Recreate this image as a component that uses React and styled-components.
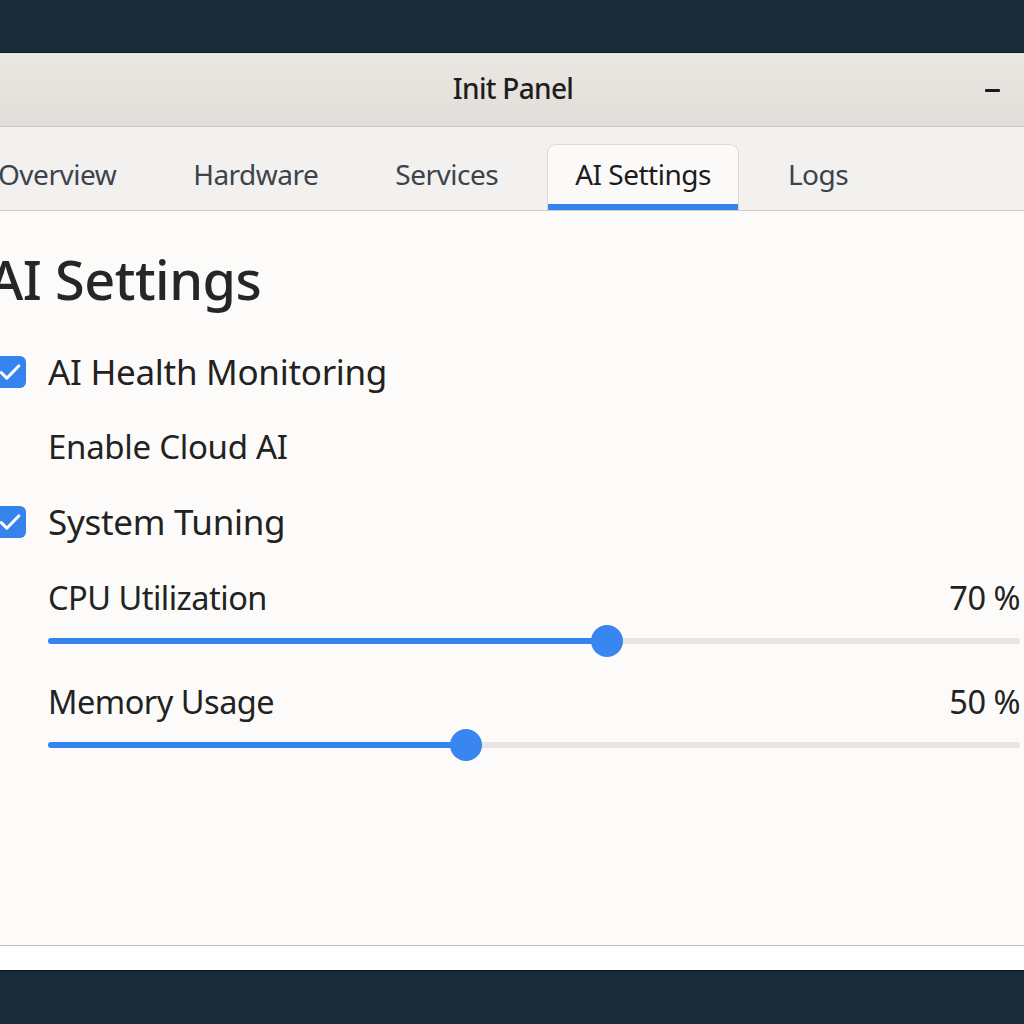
import React from 'react';
import styled, { createGlobalStyle } from 'styled-components';

const GlobalStyle = createGlobalStyle`
  html, body {
    margin: 0;
    padding: 0;
    background: #1c2b38;
    overflow: hidden;
  }
  body {
    font-family: "Noto Sans", "DejaVu Sans", sans-serif;
  }
`;

const Page = styled.div`
  width: 1024px;
  height: 1024px;
  padding-top: 52px;
  box-sizing: border-box;
  background: linear-gradient(#1c2b38, #1b2a37);
  overflow: hidden;
`;

const Window = styled.div`
  margin-left: -34px;
  width: 1058px;
  border-top: 1px solid #0f171d;
  border-bottom: 1px solid #0e1418;
  background: #fff;
  display: flex;
  flex-direction: column;
`;

const TitleBar = styled.header`
  height: 74px;
  box-sizing: border-box;
  padding: 0 0 4px 36px;
  display: grid;
  grid-template-columns: 1fr auto 1fr;
  align-items: center;
  background: linear-gradient(#ebe8e4, #e1deda);
  border-bottom: 1px solid #c9c5c1;
`;

const Title = styled.h1`
  grid-column: 2;
  margin: 0;
  font-size: 28px;
  font-weight: 500;
  color: #1e1e1e;
  letter-spacing: -0.7px;
`;

const Minimize = styled.button`
  grid-column: 3;
  justify-self: end;
  margin: 6px 24px 0 0;
  width: 15px;
  height: 3px;
  padding: 0;
  border: none;
  border-radius: 1px;
  background: #1a1a1a;
`;

const TabBar = styled.nav`
  height: 83px;
  display: flex;
  align-items: flex-end;
  gap: 21px;
  padding-left: 4px;
  background: #f2f1ef;
  border-bottom: 1px solid #cfcbc7;
`;

const Tab = styled.div`
  box-sizing: border-box;
  height: 66px;
  padding: 0 27px 8px;
  display: flex;
  align-items: center;
  font-size: 28px;
  letter-spacing: -0.5px;
  color: ${p => (p.$active ? '#1c1c1c' : '#3d434b')};
  background: ${p => (p.$active ? '#fbfaf8' : 'transparent')};
  border: 1px solid ${p => (p.$active ? '#dcd9d5' : 'transparent')};
  border-bottom: none;
  border-radius: 9px 9px 0 0;
  box-shadow: ${p => (p.$active ? 'inset 0 -6px 0 #3584ee' : 'none')};
`;

const Content = styled.main`
  height: 735px;
  box-sizing: border-box;
  padding: 24px 4px 0 28px;
  background: #fcfbf9;
  border-bottom: 1px solid #c5bfba;
`;

const Footer = styled.footer`
  height: 24px;
  background: #ffffff;
`;

const Heading = styled.h2`
  margin: 0 0 11px -6px;
  height: 88px;
  line-height: 88px;
  font-size: 54px;
  font-weight: 500;
  color: #262626;
  letter-spacing: -0.5px;
`;

const OptionRow = styled.label`
  height: 75px;
  display: flex;
  align-items: center;
  gap: 22px;
  padding-left: ${p => (p.$indent ? '54px' : '0')};
  font-size: ${p => (p.$big ? '35px' : '33px')};
  color: #222;
  letter-spacing: -0.3px;
`;

const CheckBox = styled.span`
  width: 32px;
  height: 32px;
  flex: none;
  border-radius: 6px;
  background: #3584ee;
  display: flex;
  align-items: center;
  justify-content: center;
`;

const SliderGroup = styled.div`
  padding-left: 54px;
  margin-bottom: 16px;
  &:first-of-type {
    margin-top: 18px;
  }
`;

const SliderHead = styled.div`
  height: 40px;
  display: flex;
  justify-content: space-between;
  align-items: center;
  font-size: 32.5px;
  color: #222;
  letter-spacing: -0.5px;
`;

const TrackArea = styled.div`
  height: 48px;
  display: flex;
  align-items: center;
`;

const Track = styled.div`
  width: 100%;
  height: 6px;
  border-radius: 3px;
  background: #e6e5e3;
  position: relative;
`;

const Fill = styled.div`
  position: absolute;
  left: 0;
  top: 0;
  bottom: 0;
  border-radius: 3px;
  background: #3584ee;
`;

const Thumb = styled.div`
  position: absolute;
  top: 50%;
  width: 32px;
  height: 32px;
  margin: -16px 0 0 -16px;
  border-radius: 50%;
  background: #3a86f0;
`;

const Check = () => (
  <svg width="28" height="28" viewBox="0 0 24 24" fill="none">
    <path d="M4.5 12.5l4.8 4.8L19.5 6.8" stroke="#fff" strokeWidth="2.6" strokeLinecap="round" strokeLinejoin="round" />
  </svg>
);

const Slider = ({ label, value, pos }) => (
  <SliderGroup>
    <SliderHead>
      <span>{label}</span>
      <span>{value} %</span>
    </SliderHead>
    <TrackArea>
      <Track>
        <Fill style={{ width: `${pos}%` }} />
        <Thumb style={{ left: `${pos}%` }} />
      </Track>
    </TrackArea>
  </SliderGroup>
);

const tabs = ['Overview', 'Hardware', 'Services', 'AI Settings', 'Logs'];

export default function App() {
  return (
    <Page>
      <GlobalStyle />
      <Window>
        <TitleBar>
          <Title>Init Panel</Title>
          <Minimize aria-label="Minimize" />
        </TitleBar>
        <TabBar>
          {tabs.map(t => (
            <Tab key={t} $active={t === 'AI Settings'}>{t}</Tab>
          ))}
        </TabBar>
        <Content>
          <Heading>AI Settings</Heading>
          <OptionRow $big>
            <CheckBox><Check /></CheckBox>
            AI Health Monitoring
          </OptionRow>
          <OptionRow $indent>Enable Cloud AI</OptionRow>
          <OptionRow $big>
            <CheckBox><Check /></CheckBox>
            System Tuning
          </OptionRow>
          <Slider label="CPU Utilization" value={70} pos={57.5} />
          <Slider label="Memory Usage" value={50} pos={43} />
        </Content>
        <Footer />
      </Window>
    </Page>
  );
}
